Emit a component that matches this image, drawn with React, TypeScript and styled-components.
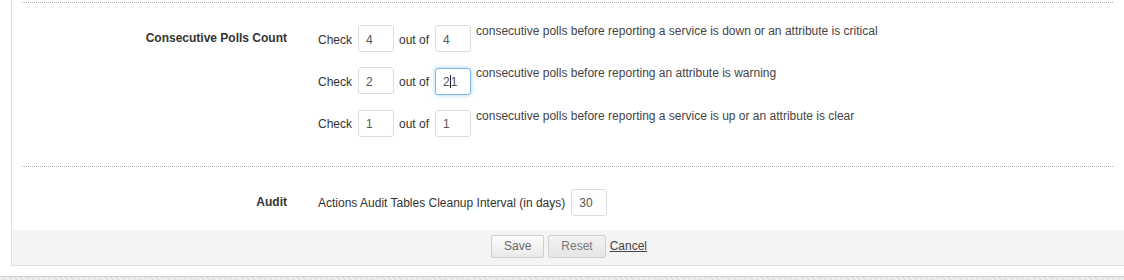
import React from "react";
import styled, { createGlobalStyle } from "styled-components";

const GlobalStyle = createGlobalStyle`
  body {
    margin: 0;
    background: #fff;
    font-family: "Liberation Sans", Arial, sans-serif;
    font-size: 12px;
    color: #333;
    overflow: hidden;
  }
`;

const pollRows = [
  { check: "4", outOf: "4", text: "consecutive polls before reporting a service is down or an attribute is critical" },
  { check: "2", outOf: "21", text: "consecutive polls before reporting an attribute is warning", focused: true },
  { check: "1", outOf: "1", text: "consecutive polls before reporting a service is up or an attribute is clear" },
];

const App = () => {
  return (
    <>
      <GlobalStyle />
      <S.Panel>
        <S.Section $top={22} $bottom={29}>
          <S.Label>Consecutive Polls Count</S.Label>
          <S.Rows>
            {pollRows.map((row, i) => (
              <S.Row key={i}>
                <span>Check</span>
                <S.Input readOnly value={row.check} />
                <span>out of</span>
                {row.focused ? (
                  <S.Input as="div" $focused>
                    {row.outOf.slice(0, 1)}
                    <S.Caret />
                    {row.outOf.slice(1)}
                  </S.Input>
                ) : (
                  <S.Input readOnly value={row.outOf} />
                )}
                <S.Description>{row.text}</S.Description>
              </S.Row>
            ))}
          </S.Rows>
        </S.Section>
        <S.Section $top={22} $bottom={14}>
          <S.Label>Audit</S.Label>
          <S.Row>
            <span>Actions Audit Tables Cleanup Interval (in days)</span>
            <S.Input readOnly value="30" />
          </S.Row>
        </S.Section>
        <S.Footer>
          <S.Button>Save</S.Button>
          <S.Button $muted>Reset</S.Button>
          <S.Link href="#">Cancel</S.Link>
        </S.Footer>
      </S.Panel>
      <S.PageEdge />
    </>
  );
};

export default App;

const S = {
  Panel: styled.div`
    margin-left: 11px;
    padding-top: 2px;
    width: 1114px;
    border-left: 1px solid #ddd;
    border-bottom: 1px solid #ddd;
  `,
  Section: styled.div<{ $top: number; $bottom: number }>`
    display: grid;
    grid-template-columns: 265px 1fr;
    column-gap: 31px;
    align-items: start;
    margin: 0 13px 0 10px;
    padding: ${(p) => p.$top}px 0 ${(p) => p.$bottom}px;
    border-top: 1px dotted #aaa;
  `,
  Label: styled.div`
    text-align: right;
    font-weight: bold;
    line-height: 27px;
    color: #333;
  `,
  Rows: styled.div`
    display: flex;
    flex-direction: column;
    gap: 15px;
  `,
  Row: styled.div`
    display: flex;
    align-items: baseline;
    color: #333;
  `,
  Input: styled.input<{ $focused?: boolean }>`
    box-sizing: border-box;
    width: 36px;
    height: 27px;
    margin: 0 5px 0 6px;
    padding: 6px 7px 4px;
    border: 1px solid ${(p) => (p.$focused ? "#7fb7e6" : "#ddd")};
    border-radius: 3px;
    box-shadow: ${(p) => (p.$focused ? "0 0 4px rgba(102, 175, 233, 0.6)" : "none")};
    background: #fff;
    font-family: "Liberation Sans", Arial, sans-serif;
    font-size: 12px;
    line-height: 15px;
    color: #555;
    outline: none;
  `,
  Caret: styled.span`
    display: inline-block;
    width: 1px;
    height: 13px;
    background: #222;
    vertical-align: -2px;
  `,
  Description: styled.span`
    align-self: flex-start;
    line-height: 12px;
    color: #444;
  `,
  Footer: styled.div`
    box-sizing: border-box;
    height: 35px;
    padding-top: 5px;
    display: flex;
    justify-content: center;
    align-items: baseline;
    gap: 4px;
    background: #f4f4f4;
  `,
  Button: styled.button<{ $muted?: boolean }>`
    height: 23px;
    padding: 0 12px;
    border: 1px solid #cfcfcf;
    border-radius: 2px;
    background: ${(p) => (p.$muted ? "linear-gradient(#f2f2f2, #e6e6e6)" : "linear-gradient(#fdfdfd, #e9e9e9)")};
    color: ${(p) => (p.$muted ? "#777" : "#666")};
    font-family: "Liberation Sans", Arial, sans-serif;
    font-size: 12px;
  `,
  Link: styled.a`
    color: #444;
    text-decoration: underline;
  `,
  PageEdge: styled.div`
    margin-top: 10px;
    height: 4px;
    border-top: 1px solid #cfcfcf;
    background: repeating-linear-gradient(45deg, #e4e4e4 0 2px, #efefef 2px 4px);
  `,
};
